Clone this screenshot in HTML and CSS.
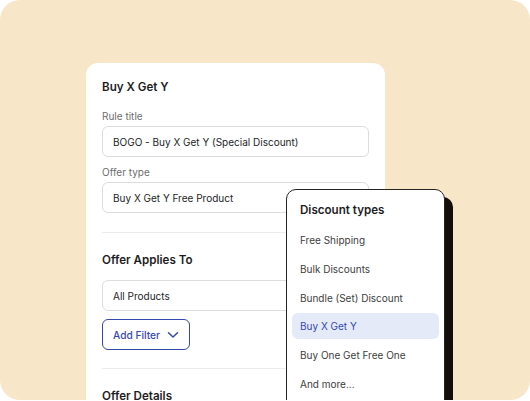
FILE: index.html
```html
<!DOCTYPE html>
<html lang="en">

<head>
  <meta charset="UTF-8" />
  <meta name="viewport" content="width=device-width, initial-scale=1.0" />
  <title>Buy X Get Y</title>
  <link rel="stylesheet" href="styles.css">
</head>

<body>
  <div class="stage">
    <div class="rule-card">
      <h2 class="card-title">Buy X Get Y</h2>

      <label class="field-label">Rule title</label>
      <div class="field">BOGO - Buy X Get Y (Special Discount)</div>

      <label class="field-label">Offer type</label>
      <div class="field">Buy X Get Y Free Product</div>

      <hr class="divider" />

      <h2 class="card-title section">Offer Applies To</h2>
      <div class="field field-spaced">All Products</div>

      <button class="filter-btn">
        Add Filter
        <svg width="12" height="8" viewBox="0 0 12 8">
          <path d="M1.5 1.8 L6 6 L10.5 1.8" fill="none" stroke="currentColor" stroke-width="1.5" stroke-linecap="round" stroke-linejoin="round" />
        </svg>
      </button>

      <hr class="divider" />

      <h2 class="card-title section">Offer Details</h2>
    </div>

    <div class="type-menu">
      <div class="menu-title">Discount types</div>
      <ul class="menu-list">
        <li>Free Shipping</li>
        <li>Bulk Discounts</li>
        <li>Bundle (Set) Discount</li>
        <li class="active">Buy X Get Y</li>
        <li>Buy One Get Free One</li>
        <li>And more...</li>
      </ul>
    </div>
  </div>
</body>

</html>
```

FILE: styles.css
```css
body {
  margin: 0;
  background: #fff;
  font-family: Inter, "Noto Sans", sans-serif;
  color: #1d1d1f;
}

.stage {
  position: relative;
  width: 530px;
  height: 400px;
  background: #f8e6c9;
  border-radius: 20px;
  overflow: hidden;
  padding: 63px 0 0 86px;
  box-sizing: border-box;
}

.rule-card {
  width: 299px;
  height: 400px;
  background: #fff;
  border-radius: 12px;
  padding: 16px 16px 0;
  box-sizing: border-box;
}

.card-title {
  margin: 0;
  font-size: 11.6px;
  line-height: 16px;
  font-weight: 600;
}

.card-title.section {
  margin-top: 19px;
}

.field-label {
  display: block;
  margin: 14px 0 3px;
  font-size: 10px;
  line-height: 14px;
  color: #6d6d6d;
}

.field-label + .field + .field-label {
  margin-top: 8px;
}

.field {
  height: 31px;
  border: 1px solid #dcdcdc;
  border-radius: 6px;
  padding: 0 10px;
  display: flex;
  align-items: center;
  font-size: 10px;
  box-sizing: border-box;
}

.field-spaced {
  margin-top: 12px;
}

.divider {
  border: none;
  border-top: 1px solid #ececec;
  margin: 19px 0 0;
}

.filter-btn {
  margin: 8px 0 18px;
  height: 31px;
  padding: 0 10px;
  display: flex;
  align-items: center;
  gap: 7px;
  background: #fff;
  border: 1px solid #3548ad;
  border-radius: 6px;
  color: #3548ad;
  font-family: inherit;
  font-size: 10.2px;
  font-weight: 500;
}

.filter-btn + .divider {
  margin-top: 0;
}

.type-menu {
  position: absolute;
  left: 286px;
  top: 189px;
  width: 159px;
  height: 230px;
  background: #fff;
  border: 1px solid #242424;
  border-radius: 10px;
  box-shadow: 8px 8px 0 #140e0b;
  box-sizing: border-box;
}

.menu-title {
  padding: 12px 13px 0;
  font-size: 11.6px;
  line-height: 16px;
  font-weight: 600;
}

.menu-list {
  list-style: none;
  margin: 9px 0 0;
  padding: 0 5px;
  display: flex;
  flex-direction: column;
  gap: 2.8px;
}

.menu-list li {
  height: 26px;
  padding: 0 8px;
  display: flex;
  align-items: center;
  border-radius: 6px;
  font-size: 10px;
  color: #404040;
}

.menu-list li.active {
  background: #e5eaf8;
  color: #3548ad;
}
```
